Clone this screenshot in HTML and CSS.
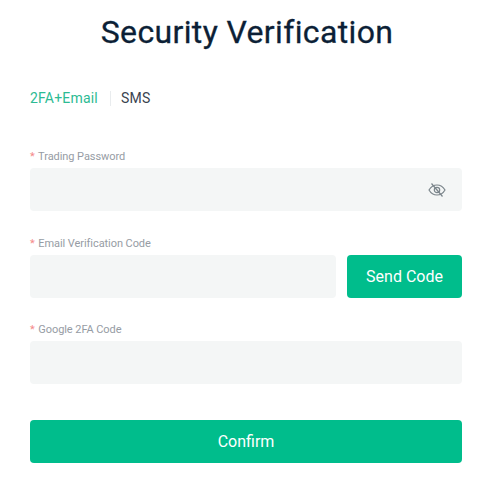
FILE: index.html
```html
<!DOCTYPE html>
<html lang="en">
<head>
<meta charset="utf-8">
<title>Security Verification</title>
<link rel="stylesheet" href="styles.css">
</head>
<body>
<main class="page">
  <h1 class="title">Security Verification</h1>
  <div class="tabs">
    <span class="tab tab-active">2FA+Email</span>
    <span class="tab-sep"></span>
    <span class="tab">SMS</span>
  </div>
  <form class="form">
    <div class="field">
      <div class="label"><span class="req">*</span> Trading Password</div>
      <div class="input input-icon">
        <svg class="eye" viewBox="0 0 18 16" width="18" height="16" fill="none" stroke="#7b858b" stroke-width="1.2">
          <path d="M1 8c2-3.400 4.800-5 8-5s6 1.600 8 5c-2 3.400-4.800 5-8 5s-6-1.600-8-5z"/>
          <circle cx="9" cy="8" r="2.700"/>
          <path d="M3.500 1.500l11 13"/>
        </svg>
      </div>
    </div>
    <div class="field">
      <div class="label"><span class="req">*</span> Email Verification Code</div>
      <div class="row">
        <div class="input input-grow"></div>
        <button type="button" class="btn btn-send">Send Code</button>
      </div>
    </div>
    <div class="field">
      <div class="label"><span class="req">*</span> Google 2FA Code</div>
      <div class="input"></div>
    </div>
    <button type="button" class="btn btn-confirm">Confirm</button>
  </form>
</main>
</body>
</html>
```
FILE: styles.css
```css
* { box-sizing: border-box; }
html, body { margin: 0; padding: 0; background: #fff; }
body { font-family: Roboto, "Liberation Sans", sans-serif; }
.page { padding: 12px 26px 0 30px; }
.title {
  margin: 0;
  padding-left: 2px;
  height: 40px;
  line-height: 40px;
  font-size: 32px;
  font-weight: 400;
  color: #0c1f36;
  text-align: center;
  letter-spacing: 0.36px;
  -webkit-text-stroke: 0.3px #0c1f36;
}
.tabs {
  display: flex;
  align-items: center;
  margin-top: 36px;
  height: 20px;
  font-size: 14px;
  letter-spacing: 0.2px;
}
.tab { color: #3a4350; }
.tab-active { color: #2dbb93; }
.tab-sep { width: 1px; height: 15px; background: #e9ecee; margin: 0 10px 0 12px; }
.form { display: flex; flex-direction: column; margin-top: 41px; }
.field { display: flex; flex-direction: column; margin-bottom: 24.5px; }
.label { height: 19px; line-height: 16px; font-size: 11px; letter-spacing: -0.07px; color: #969ca4; }
.req { color: #f58a8a; margin-right: 1px; }
.input { height: 43px; background: #f4f6f6; border-radius: 4px; }
.input-icon { display: flex; align-items: center; justify-content: flex-end; padding-right: 16px; }
.input-grow { flex: 1; }
.row { display: flex; gap: 11px; }
.btn {
  border: 0;
  border-radius: 4px;
  background: #00bd8c;
  color: #fff;
  font-family: inherit;
  font-size: 16px;
  height: 43px;
  padding: 0;
}
.btn-send { width: 115px; }
.btn-confirm { width: 100%; margin-top: 11.5px; }
```
